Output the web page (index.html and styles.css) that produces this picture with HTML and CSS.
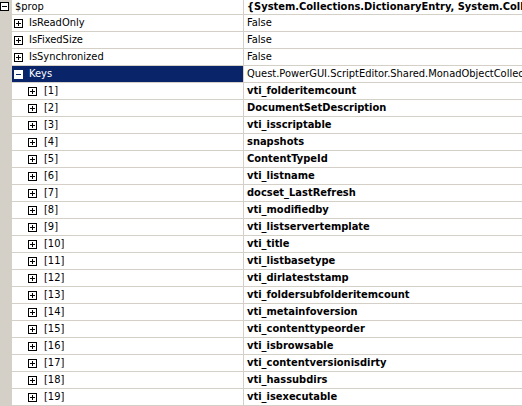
FILE: index.html
```html
<!DOCTYPE html>
<html>
<head>
<meta charset="utf-8">
<link rel="stylesheet" href="styles.css">
</head>
<body>
<div class="grid">
  <div class="row top">
    <div class="gutter"><span class="exp minus"></span></div>
    <div class="name lvl0">$prop</div>
    <div class="value bold">{System.Collections.DictionaryEntry, System.Collections.DictionaryEntry}</div>
  </div>
  <div class="row">
    <div class="gutter"></div>
    <div class="name lvl1"><span class="exp plus"></span><span>IsReadOnly</span></div>
    <div class="value">False</div>
  </div>
  <div class="row">
    <div class="gutter"></div>
    <div class="name lvl1"><span class="exp plus"></span><span>IsFixedSize</span></div>
    <div class="value">False</div>
  </div>
  <div class="row">
    <div class="gutter"></div>
    <div class="name lvl1"><span class="exp plus"></span><span>IsSynchronized</span></div>
    <div class="value">False</div>
  </div>
  <div class="row">
    <div class="gutter"></div>
    <div class="name lvl1 selected"><span class="exp minus sel"></span><span>Keys</span></div>
    <div class="value">Quest.PowerGUI.ScriptEditor.Shared.MonadObjectCollection</div>
  </div>
  <div class="row"><div class="gutter"></div><div class="name lvl2"><span class="exp plus"></span><span>[1]</span></div><div class="value bold">vti_folderitemcount</div></div>
  <div class="row"><div class="gutter"></div><div class="name lvl2"><span class="exp plus"></span><span>[2]</span></div><div class="value bold">DocumentSetDescription</div></div>
  <div class="row"><div class="gutter"></div><div class="name lvl2"><span class="exp plus"></span><span>[3]</span></div><div class="value bold">vti_isscriptable</div></div>
  <div class="row"><div class="gutter"></div><div class="name lvl2"><span class="exp plus"></span><span>[4]</span></div><div class="value bold">snapshots</div></div>
  <div class="row"><div class="gutter"></div><div class="name lvl2"><span class="exp plus"></span><span>[5]</span></div><div class="value bold">ContentTypeId</div></div>
  <div class="row"><div class="gutter"></div><div class="name lvl2"><span class="exp plus"></span><span>[6]</span></div><div class="value bold">vti_listname</div></div>
  <div class="row"><div class="gutter"></div><div class="name lvl2"><span class="exp plus"></span><span>[7]</span></div><div class="value bold">docset_LastRefresh</div></div>
  <div class="row"><div class="gutter"></div><div class="name lvl2"><span class="exp plus"></span><span>[8]</span></div><div class="value bold">vti_modifiedby</div></div>
  <div class="row"><div class="gutter"></div><div class="name lvl2"><span class="exp plus"></span><span>[9]</span></div><div class="value bold">vti_listservertemplate</div></div>
  <div class="row"><div class="gutter"></div><div class="name lvl2"><span class="exp plus"></span><span>[10]</span></div><div class="value bold">vti_title</div></div>
  <div class="row"><div class="gutter"></div><div class="name lvl2"><span class="exp plus"></span><span>[11]</span></div><div class="value bold">vti_listbasetype</div></div>
  <div class="row"><div class="gutter"></div><div class="name lvl2"><span class="exp plus"></span><span>[12]</span></div><div class="value bold">vti_dirlateststamp</div></div>
  <div class="row"><div class="gutter"></div><div class="name lvl2"><span class="exp plus"></span><span>[13]</span></div><div class="value bold">vti_foldersubfolderitemcount</div></div>
  <div class="row"><div class="gutter"></div><div class="name lvl2"><span class="exp plus"></span><span>[14]</span></div><div class="value bold">vti_metainfoversion</div></div>
  <div class="row"><div class="gutter"></div><div class="name lvl2"><span class="exp plus"></span><span>[15]</span></div><div class="value bold">vti_contenttypeorder</div></div>
  <div class="row"><div class="gutter"></div><div class="name lvl2"><span class="exp plus"></span><span>[16]</span></div><div class="value bold">vti_isbrowsable</div></div>
  <div class="row"><div class="gutter"></div><div class="name lvl2"><span class="exp plus"></span><span>[17]</span></div><div class="value bold">vti_contentversionisdirty</div></div>
  <div class="row"><div class="gutter"></div><div class="name lvl2"><span class="exp plus"></span><span>[18]</span></div><div class="value bold">vti_hassubdirs</div></div>
  <div class="row"><div class="gutter"></div><div class="name lvl2"><span class="exp plus"></span><span>[19]</span></div><div class="value bold">vti_isexecutable</div></div>
</div>
</body>
</html>
```
FILE: styles.css
```css
html, body {
  margin: 0;
  padding: 0;
  background: #ffffff;
}
body {
  width: 522px;
  height: 406px;
  overflow: hidden;
  font-family: "DejaVu Sans Condensed", "DejaVu Sans", sans-serif;
  font-size: 11px;
  color: #000000;
}
.grid {
  display: flex;
  flex-direction: column;
}
.row {
  display: flex;
  height: 16px;
  border-bottom: 1px solid #d4d0c8;
}
.row.top {
  height: 14px;
}
.gutter {
  width: 12px;
  flex: none;
  background: #d4d0c8;
  display: flex;
  align-items: flex-start;
}
.top .gutter .exp {
  margin: 2px 0 0 0;
}
.name {
  width: 231px;
  flex: none;
  border-right: 1px solid #d4d0c8;
  display: flex;
  align-items: center;
  white-space: nowrap;
  overflow: hidden;
  line-height: 16px;
}
.top .name {
  line-height: 14px;
}
.name.lvl0 {
  padding-left: 3px;
  width: 228px;
}
.name.lvl1 .exp {
  margin-left: 2px;
  margin-right: 6px;
}
.name.lvl2 .exp {
  margin-left: 16px;
  margin-right: 7px;
}
.name.selected {
  background: #0a246a;
  color: #ffffff;
}
.value {
  flex: 1;
  min-width: 0;
  padding-left: 3px;
  white-space: nowrap;
  overflow: hidden;
  line-height: 16px;
}
.top .value {
  line-height: 14px;
}
.bold {
  font-weight: bold;
}
.exp {
  width: 9px;
  height: 9px;
  flex: none;
  box-sizing: border-box;
  border: 1px solid #000000;
  background: #ffffff;
  position: relative;
}
.exp::before {
  content: "";
  position: absolute;
  left: 1px;
  top: 3px;
  width: 5px;
  height: 1px;
  background: #000000;
}
.exp.plus::after {
  content: "";
  position: absolute;
  left: 3px;
  top: 1px;
  width: 1px;
  height: 5px;
  background: #000000;
}
.exp.sel {
  border-color: #ffffff;
}
.exp.sel::before {
  background: #0a246a;
}
```
